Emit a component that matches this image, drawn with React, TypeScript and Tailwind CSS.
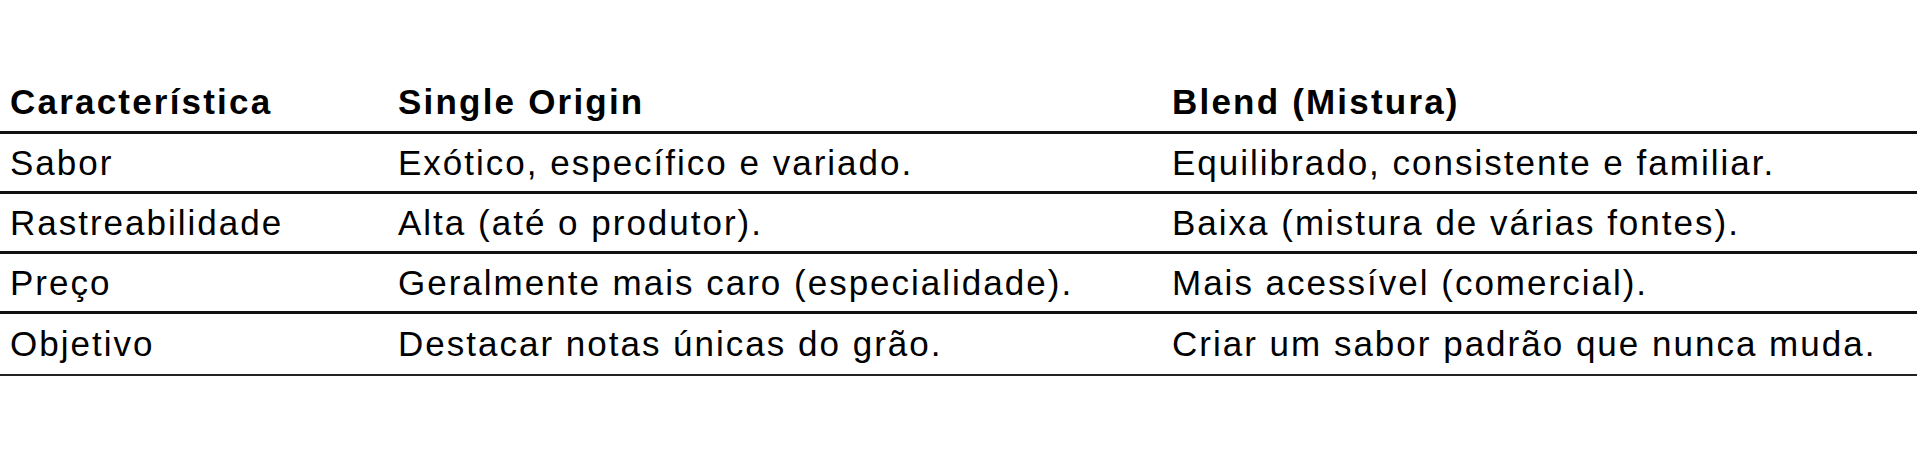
import React from "react";

const rows: [string, string, string][] = [
  ["Sabor", "Exótico, específico e variado.", "Equilibrado, consistente e familiar."],
  ["Rastreabilidade", "Alta (até o produtor).", "Baixa (mistura de várias fontes)."],
  ["Preço", "Geralmente mais caro (especialidade).", "Mais acessível (comercial)."],
  ["Objetivo", "Destacar notas únicas do grão.", "Criar um sabor padrão que nunca muda."],
];

export default function App() {
  return (
    <div
      className="w-[1920px] h-[450px] bg-white text-black pt-[72px]"
      style={{ fontFamily: '"Liberation Sans", Arial, sans-serif' }}
    >
      <table className="w-[1917px] border-collapse table-fixed">
        <colgroup>
          <col className="w-[388px]" />
          <col className="w-[774px]" />
          <col />
        </colgroup>
        <thead>
          <tr className="h-[60px] border-b-[3px] border-[#111]">
            <th className="text-left font-bold text-[35px] leading-none tracking-[2.2px] pl-[10px] align-middle whitespace-nowrap">Característica</th>
            <th className="text-left font-bold text-[35px] leading-none tracking-[2.2px] pl-[10px] align-middle whitespace-nowrap">Single Origin</th>
            <th className="text-left font-bold text-[35px] leading-none tracking-[2.2px] pl-[10px] align-middle whitespace-nowrap">Blend (Mistura)</th>
          </tr>
        </thead>
        <tbody>
          {rows.map((r, i) => (
            <tr
              key={i}
              className={
                i === rows.length - 1
                  ? "h-[63px] border-b-[2px] border-[#222]"
                  : "h-[60px] border-b-[3px] border-[#111]"
              }
            >
              {r.map((c, j) => (
                <td key={j} className="text-[35px] leading-none tracking-[2px] pl-[10px] align-middle whitespace-nowrap">
                  {c}
                </td>
              ))}
            </tr>
          ))}
        </tbody>
      </table>
    </div>
  );
}
